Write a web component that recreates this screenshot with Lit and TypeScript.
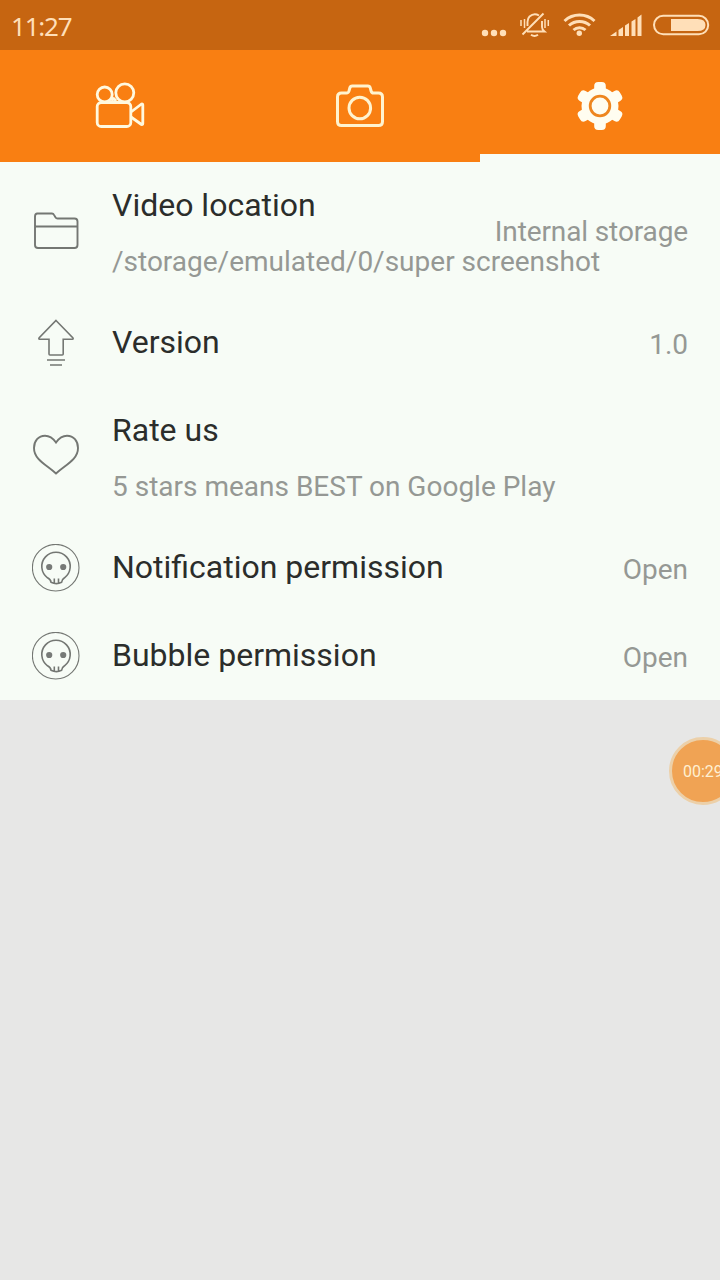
import { LitElement, html, svg, css } from "lit";
import { customElement } from "lit/decorators.js";

const folder = svg`<path d="M36.500 213.500h15.500q1.300 0 2 1.400l1.600 2.600q.6 1 1.900 1h17q3 0 3 3v23.500q0 3-3 3h-36.500q-3 0-3-3v-28.500q0-3 2.500-3zM35 226.500h42"/>`;
const arrow = svg`<path d="M56 320.500L73 338q.6 1.200-.6 1.200H63.200V354q0 1-1 1H50q-1 0-1-1V339.200H39.600q-1.200 0-.6-1.200zM47 360h18M50 365h12" stroke-width="1.600"/>`;
const heart = svg`<path d="M56 442.500C52.500 437.500 48.500 435.700 45 435.700C38.500 435.700 34 441 34 448C34 459.500 46 464.500 56 473.500C66 464.500 78 459.500 78 448C78 441 73.500 435.700 67 435.700C63.500 435.700 59.500 437.500 56 442.500Z" stroke-width="1.900"/>`;
const skull = svg`<circle cx="55.700" cy="567.700" r="23.300" stroke-width="1.100"/>
  <path d="M51 582.300Q50.800 579.500 47.500 577.800A14.200 14.200 0 1 1 64.500 577.800Q61.800 579.500 61.600 582.300Q56.500 585 51 582.300ZM54.300 578.500v5M58.500 578.500v5" stroke-width="1.600"/>
  <circle cx="49.200" cy="567" r="3.100" fill="#777a77" stroke="none"/><circle cx="63.200" cy="567" r="3.100" fill="#777a77" stroke="none"/>`;

const rows = [
  { icon: folder, box: "32 207 48 48", title: "Video location", detail: "/storage/emulated/0/super screenshot", value: "Internal storage" },
  { icon: arrow, box: "32 319 48 48", title: "Version", detail: "", value: "1.0" },
  { icon: heart, box: "32 432 48 48", title: "Rate us", detail: "5 stars means BEST on Google Play", value: "" },
  { icon: skull, box: "32 544 48 48", title: "Notification permission", detail: "", value: "Open" },
  { icon: skull, box: "32 544 48 48", title: "Bubble permission", detail: "", value: "Open" },
];

@customElement("app-root")
export class AppRoot extends LitElement {
  static styles = css`
    :host { display: block; position: relative; width: 720px; height: 1280px; overflow: hidden; background: #e7e7e6; font-family: Roboto, sans-serif; }
    svg { display: block; }
    .status { height: 50px; background: #c66511; display: flex; justify-content: space-between; align-items: center; color: #ffdfb8; }
    .time { font-size: 26px; line-height: 30px; padding: 2px 0 0 11px; letter-spacing: -1.200px; font-family: "Noto Sans", sans-serif; }
    .tabs { height: 112px; background: #f97f12; display: grid; grid-template-columns: repeat(3, 1fr); }
    .tab { display: flex; justify-content: center; align-items: center; box-sizing: border-box; height: 112px; }
    .active { border-bottom: 8px solid #f7fcf6; padding-top: 8px; }
    .list { background: #f7fcf6; }
    .row { display: grid; grid-template-columns: 48px 1fr; column-gap: 32px; align-items: center; height: 88px; padding: 0 32px; }
    .tall { height: 137px; }
    .icon { grid-area: 1 / 1; fill: none; stroke: #747773; stroke-width: 1.900; }
    .text { grid-area: 1 / 2; }
    .title { font-size: 32px; line-height: 38px; color: #2b2d2b; padding-bottom: 2px; }
    .tall .title { padding: 0; }
    .detail, .value { font-size: 28px; line-height: 33px; color: #959894; white-space: nowrap; }
    .detail { padding-top: 21px; }
    .tall .text { padding-top: 3px; }
    .tall .value { letter-spacing: -0.120px; }
    .value { grid-area: 1 / 2; justify-self: end; padding-top: 2px; }
    .bubble { position: absolute; left: 669px; top: 737px; width: 68px; height: 68px; box-sizing: border-box; border: 3.500px solid #ecd0a9; border-radius: 50%; background: #f0a354; color: #fff0d2; font-size: 16px; line-height: 64px; padding-left: 11px; white-space: nowrap; }
  `;

  render() {
    return html`
      <div class="status">
        <div class="time">11:27</div>
        <svg width="250" height="50" viewBox="470 0 250 50" fill="none" stroke="#ffdfb8">
          <g fill="#ffdfb8" stroke="none">
            <circle cx="485" cy="33" r="3.200"/><circle cx="494" cy="33" r="3.200"/><circle cx="503" cy="33" r="3.200"/>
            <circle cx="579.300" cy="33.300" r="2.700"/>
            <path d="M610 36l6.500-4.500V36zM618.500 30l4.500-3v9h-4.500zM625 25.500l4-2.500v13h-4zM631.500 21.500l4-2.500v17h-4zM637.500 17.500l4-3V36h-4z"/>
            <path d="M671 19h26.500q8 0 8 6t-8 6H671z"/>
          </g>
          <path d="M539 15.500Q534 12.500 529.500 16.500Q527.500 18.500 527.500 22V26M527 31.500H544.500Q542 29.500 542 27V21M522.500 34.500L543.500 13.500" stroke-width="1.900"/>
          <path d="M531 34.800q3.500 2.500 7 0" stroke-width="2"/>
          <path d="M521 20v6M524.500 19v9M545 19v9M548.300 20v6" stroke-width="1.500"/>
          <path d="M564.500 21a22 22 0 0 1 30 0M569 25.500a15.500 15.500 0 0 1 21 0M573.500 30a9 9 0 0 1 12 0" stroke-width="3"/>
          <rect x="654" y="15.800" width="54.200" height="18.500" rx="9.200" stroke-width="2"/>
        </svg>
      </div>
      <div class="tabs">
        <div class="tab">
          <svg width="56" height="56" viewBox="92 78 56 56" fill="none" stroke="#fff9df" stroke-width="2.800" stroke-linejoin="round">
            <circle cx="104.700" cy="94.500" r="7.500"/><circle cx="124.800" cy="92.800" r="9"/>
            <rect x="97.200" y="102.500" width="33.600" height="24" rx="4"/>
            <path d="M131 112l10.500-8q1.300-.5 1.300 1v18.500q0 1.500-1.300 1L131 117M111.500 101l2.200-2.500 2.500 2.500"/>
          </svg>
        </div>
        <div class="tab">
          <svg width="56" height="56" viewBox="332 78 56 56" fill="none" stroke="#fff3cf" stroke-width="3">
            <path d="M341.500 93h5q2 0 2.500-2l.8-3q.5-2 2.500-2h15.500q2 0 2.500 2l.8 3q.5 2 2.500 2h4.900q4 0 4 4v24.500q0 4-4 4h-37q-4 0-4-4V97q0-4 4-4z"/>
            <circle cx="359.800" cy="108" r="10.800"/>
          </svg>
        </div>
        <div class="tab active">
          <svg width="56" height="56" viewBox="572 78 56 56" fill="#fffdf0">
            <circle cx="600" cy="106" r="18.500"/>
            ${[0, 60, 120].map((a) => svg`<rect x="594.200" y="82" width="11.600" height="48" rx="4" transform="rotate(${a} 600 106)"/>`)}
            <circle cx="600" cy="106" r="9.800" fill="none" stroke="#ee861f" stroke-width="2.800"/>
          </svg>
        </div>
      </div>
      <div class="list">
        ${rows.map((r) => html`
          <div class="row ${r.detail ? "tall" : ""}">
            <svg class="icon" width="48" height="48" viewBox=${r.box}>${r.icon}</svg>
            <div class="text">
              <div class="title">${r.title}</div>
              ${r.detail ? html`<div class="detail">${r.detail}</div>` : ""}
            </div>
            ${r.value ? html`<div class="value">${r.value}</div>` : ""}
          </div>`)}
      </div>
      <div class="bubble">00:29</div>
    `;
  }
}
